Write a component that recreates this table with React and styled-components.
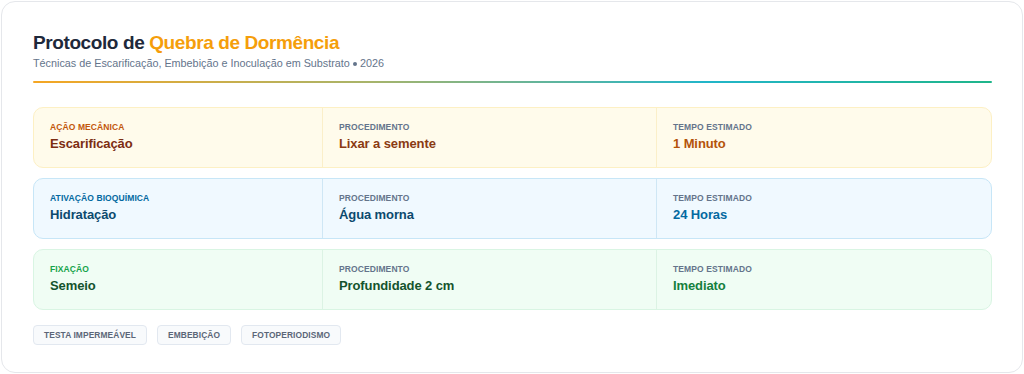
import React from "react";
import styled, { createGlobalStyle } from "styled-components";

const Global = createGlobalStyle`
  html, body { margin: 0; padding: 0; background: #ffffff; }
  body { font-family: "Liberation Sans", Arial, sans-serif; }
  * { box-sizing: border-box; }
`;

const Page = styled.div`
  padding: 1px;
  background: #ffffff;
`;

const Card = styled.div`
  width: 1022px;
  height: 372px;
  background: #ffffff;
  border: 1px solid #e5e7eb;
  border-radius: 14px;
  padding: 29px 30px 0 31px;
  display: flex;
  flex-direction: column;
`;

const Title = styled.h1`
  margin: 0;
  font-size: 19px;
  line-height: 24px;
  font-weight: 700;
  letter-spacing: -0.4px;
  color: #1e293b;
`;

const Accent = styled.span`
  color: #f59e0b;
`;

const Subtitle = styled.div`
  margin-top: 1px;
  font-size: 10.8px;
  line-height: 14px;
  color: #64748b;
`;

const Dot = styled.span`
  display: inline-block;
  width: 4px;
  height: 4px;
  border-radius: 50%;
  background: #64748b;
  margin: 0 3px;
  vertical-align: middle;
`;

const Divider = styled.div`
  margin-top: 11px;
  height: 2px;
  border-radius: 1px;
  background: linear-gradient(90deg, #f5a623 0%, #a8b46a 35%, #22b5c9 70%, #1fb58a 100%);
`;

const Rows = styled.div`
  margin-top: 24px;
  display: flex;
  flex-direction: column;
  gap: 10px;
`;

const Row = styled.div`
  display: grid;
  grid-template-columns: 288px 334px 1fr;
  height: 61px;
  border-radius: 10px;
  background: ${(p) => p.$bg};
  border: 1px solid ${(p) => p.$border};
`;

const Cell = styled.div`
  padding: 14px 16px;
  border-left: ${(p) => (p.$first ? "none" : `1px solid ${p.$border}`)};
`;

const Label = styled.div`
  font-size: 8.5px;
  line-height: 10px;
  font-weight: 700;
  text-transform: uppercase;
  letter-spacing: 0.1px;
  color: ${(p) => p.$color};
`;

const Value = styled.div`
  margin-top: 3px;
  font-size: 13px;
  line-height: 18px;
  font-weight: 700;
  letter-spacing: -0.1px;
  color: ${(p) => p.$color};
`;

const Tags = styled.div`
  margin-top: 15px;
  display: flex;
  gap: 10px;
`;

const Tag = styled.span`
  height: 20px;
  display: inline-flex;
  align-items: center;
  padding: 0 10px;
  border-radius: 4px;
  background: #f8fafc;
  border: 1px solid #e2e8f0;
  font-size: 8.4px;
  font-weight: 700;
  color: #5b6678;
  letter-spacing: 0.1px;
`;

const rows = [
  {
    bg: "#fffbeb",
    border: "#fdf0c4",
    divider: "#fbefc9",
    kind: "Ação Mecânica",
    kindColor: "#c2570c",
    name: "Escarificação",
    nameColor: "#7c2d12",
    proc: "Lixar a semente",
    procColor: "#8a3a12",
    time: "1 Minuto",
    timeColor: "#b45309",
  },
  {
    bg: "#f0f9ff",
    border: "#c7e6f7",
    divider: "#cfe7f5",
    kind: "Ativação Bioquímica",
    kindColor: "#0369a1",
    name: "Hidratação",
    nameColor: "#0c4a6e",
    proc: "Água morna",
    procColor: "#0c4a6e",
    time: "24 Horas",
    timeColor: "#0369a1",
  },
  {
    bg: "#f0fdf4",
    border: "#d9f5e3",
    divider: "#dcf3e4",
    kind: "Fixação",
    kindColor: "#16a34a",
    name: "Semeio",
    nameColor: "#14532d",
    proc: "Profundidade 2 cm",
    procColor: "#14532d",
    time: "Imediato",
    timeColor: "#15803d",
  },
];

export default function App() {
  return (
    <>
      <Global />
      <Page>
        <Card>
          <Title>
            Protocolo de <Accent>Quebra de Dormência</Accent>
          </Title>
          <Subtitle>
            Técnicas de Escarificação, Embebição e Inoculação em Substrato
            <Dot />
            2026
          </Subtitle>
          <Divider />
          <Rows>
            {rows.map((r) => (
              <Row key={r.name} $bg={r.bg} $border={r.border}>
                <Cell $first>
                  <Label $color={r.kindColor}>{r.kind}</Label>
                  <Value $color={r.nameColor}>{r.name}</Value>
                </Cell>
                <Cell $border={r.divider}>
                  <Label $color="#64748b">Procedimento</Label>
                  <Value $color={r.procColor}>{r.proc}</Value>
                </Cell>
                <Cell $border={r.divider}>
                  <Label $color="#64748b">Tempo Estimado</Label>
                  <Value $color={r.timeColor}>{r.time}</Value>
                </Cell>
              </Row>
            ))}
          </Rows>
          <Tags>
            <Tag>TESTA IMPERMEÁVEL</Tag>
            <Tag>EMBEBIÇÃO</Tag>
            <Tag>FOTOPERIODISMO</Tag>
          </Tags>
        </Card>
      </Page>
    </>
  );
}
